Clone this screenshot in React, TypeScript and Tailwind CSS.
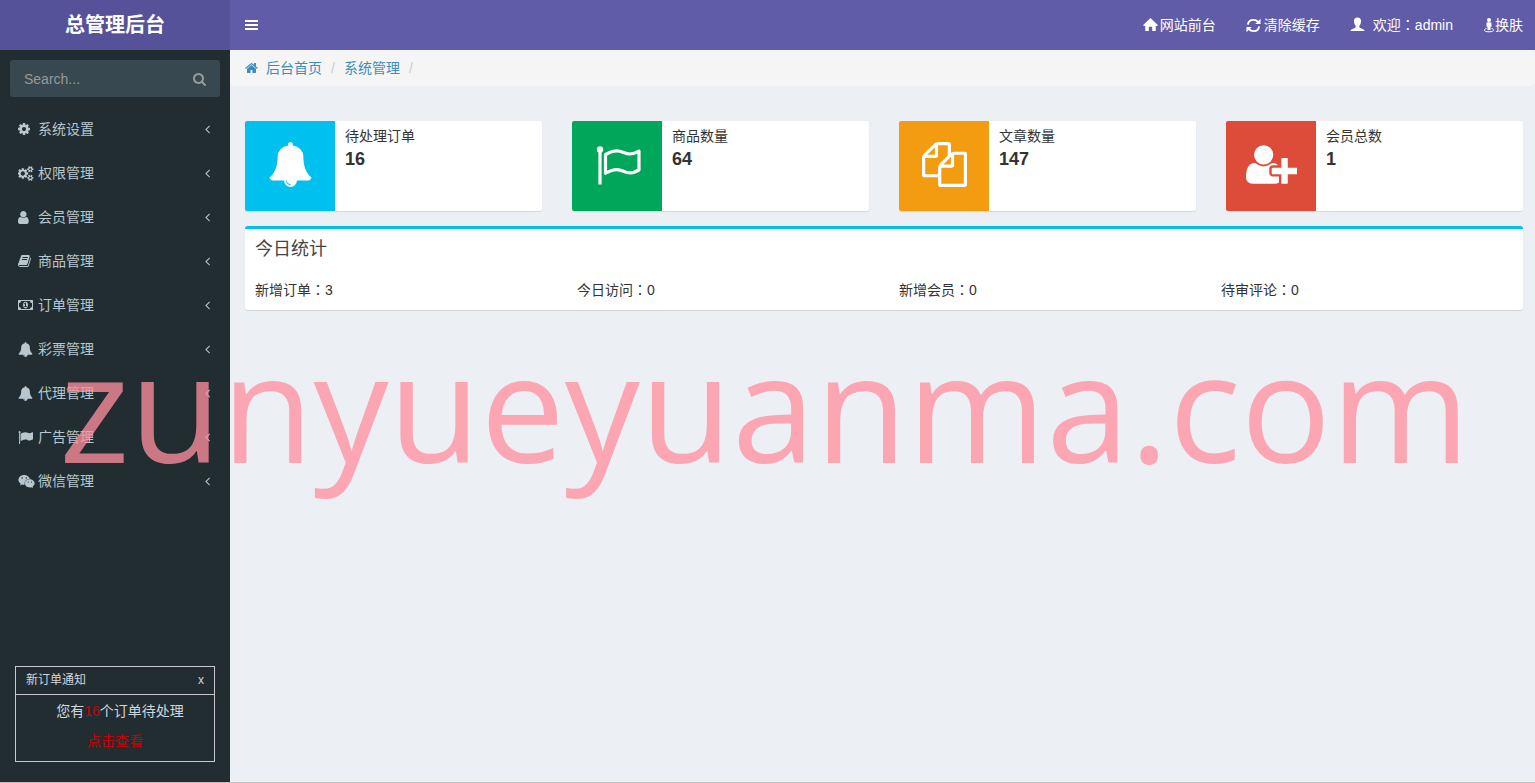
import type { ReactNode } from "react"
import { FaWeixin } from "react-icons/fa"

type Glyph = { box: string; d: string }

const GLYPHS = {
  cog: {
    box: "128 0 1536 1792",
    d: "M1152 896q0-106-75-181t-181-75-181 75-75 181 75 181 181 75 181-75 75-181zm512-109v222q0 12-8 23t-20 13l-185 28q-19 54-39 91 35 50 107 138 10 12 10 25t-9 23q-27 37-99 108t-94 71q-12 0-26-9l-138-108q-44 23-91 38-16 136-29 186-7 28-36 28h-222q-14 0-24.5-8.5t-11.5-21.5l-28-184q-49-16-90-37l-141 107q-10 9-25 9-14 0-25-11-126-114-165-168-7-10-7-23 0-12 8-23 15-21 51-66.5t54-70.5q-27-50-41-99l-183-27q-13-2-21-12.5t-8-23.5v-222q0-12 8-23t19-13l186-28q14-46 39-92-40-57-107-138-10-12-10-24 0-10 9-23 26-36 98.5-107.5t94.5-71.5q13 0 26 10l138 107q44-23 91-38 16-136 29-186 7-28 36-28h222q14 0 24.5 8.5t11.5 21.5l28 184q49 16 90 37l142-107q9-9 24-9 13 0 25 10 129 119 165 170 7 8 7 22 0 12-8 23-15 21-51 66.5t-54 70.5q26 50 41 98l183 28q13 2 21 12.5t8 23.5z",
  },
  cogs: {
    box: "0 0 1920 1792",
    d: "M832 896q0-106-75-181t-181-75-181 75-75 181 75 181 181 75 181-75 75-181zm768 512q0-52-38-90t-90-38-90 38-38 90q0 53 37.5 90.5t90.5 37.5 90.5-37.5 37.5-90.5zm0-1024q0-52-38-90t-90-38-90 38-38 90q0 53 37.5 90.5t90.5 37.5 90.5-37.5 37.5-90.5zm-384 421v185q0 10-7 19.5t-16 10.5l-155 24q-11 35-32 76 34 48 90 115 7 11 7 20 0 12-7 19-23 30-82.5 89.5t-78.5 59.5q-11 0-21-7l-115-90q-37 19-77 31-11 108-23 155-7 24-30 24h-186q-11 0-20-7.5t-10-17.5l-23-153q-34-10-75-31l-118 89q-7 7-20 7-11 0-21-8-144-133-144-160 0-9 7-19 10-14 41-53t47-61q-23-44-35-82l-152-24q-10-1-17-9.5t-7-19.5v-185q0-10 7-19.5t16-10.5l155-24q11-35 32-76-34-48-90-115-7-11-7-20 0-12 7-20 22-30 82-89t79-59q11 0 21 7l115 90q34-18 77-32 11-108 23-154 7-24 30-24h186q11 0 20 7.5t10 17.5l23 153q34 10 75 31l118-89q8-7 20-7 11 0 21 8 144 133 144 160 0 8-7 19-12 16-42 54t-45 60q23 48 34 82l152 23q10 2 17 10.5t7 19.5zm640 533v140q0 16-149 31-12 27-30 52 51 113 51 138 0 4-4 7-122 71-124 71-8 0-46-47t-52-68q-20 2-30 2t-30-2q-14 21-52 68t-46 47q-2 0-124-71-4-3-4-7 0-25 51-138-18-25-30-52-149-15-149-31v-140q0-16 149-31 13-29 30-52-51-113-51-138 0-4 4-7 4-2 35-20t59-34 30-16q8 0 46 46.5t52 67.5q20-2 30-2t30 2q51-71 92-112l6-2q4 0 124 70 4 3 4 7 0 25-51 138 17 23 30 52 149 15 149 31zm0-1024v140q0 16-149 31-12 27-30 52 51 113 51 138 0 4-4 7-122 71-124 71-8 0-46-47t-52-68q-20 2-30 2t-30-2q-14 21-52 68t-46 47q-2 0-124-71-4-3-4-7 0-25 51-138-18-25-30-52-149-15-149-31v-140q0-16 149-31 13-29 30-52-51-113-51-138 0-4 4-7 4-2 35-20t59-34 30-16q8 0 46 46.5t52 67.5q20-2 30-2t30 2q51-71 92-112l6-2q4 0 124 70 4 3 4 7 0 25-51 138 17 23 30 52 149 15 149 31z",
  },
  user: {
    box: "256 0 1280 1792",
    d: "M1536 1399q0 109-62.5 187t-150.5 78h-854q-88 0-150.5-78t-62.5-187q0-85 8.5-160.5t31.5-152 58.5-131 94-89 134.5-34.5q131 128 313 128t313-128q76 0 134.5 34.5t94 89 58.5 131 31.5 152 8.5 160.5zm-256-887q0 159-112.5 271.5t-271.5 112.5-271.5-112.5-112.5-271.5 112.5-271.5 271.5-112.5 271.5 112.5 112.5 271.5z",
  },
  book: {
    box: "64 0 1664 1792",
    d: "M1703 478q40 57 18 129l-275 906q-19 64-76.5 107.5t-122.5 43.5h-923q-77 0-148.5-53.5t-99.5-131.5q-24-67-2-127 0-4 3-27t4-37q1-8-3-21.5t-3-19.5q2-11 8-21t16.5-23.5 16.5-23.5q23-38 45-91.5t30-91.5q3-10 .5-30t-.5-28q3-11 17-28t17-23q21-36 42-92t25-90q1-9-2.5-32t.5-28q4-13 22-30.5t22-22.5q19-26 42.5-84.5t27.5-96.5q1-8-3-25.5t-2-26.5q2-8 9-18t18-23 17-21q8-12 16.5-30.5t15-35 16-36 19.5-32 26.5-23.5 36-11.5 47.5 5.5l-1 3q38-9 51-9h761q74 0 114 56t18 130l-274 906q-36 119-71.5 153.5t-128.5 34.5h-869q-27 0-38 15-11 16-1 43 24 70 144 70h923q29 0 56-15.5t35-41.5l300-987q7-22 5-57 38 15 59 43zm-1064 2q-4 13 2 22.5t20 9.5h608q13 0 25.5-9.5t16.5-22.5l21-64q4-13-2-22.5t-20-9.5h-608q-13 0-25.5 9.5t-16.5 22.5zm-83 256q-4 13 2 22.5t20 9.5h608q13 0 25.5-9.5t16.5-22.5l21-64q4-13-2-22.5t-20-9.5h-608q-13 0-25.5 9.5t-16.5 22.5z",
  },
  money: {
    box: "0 0 1920 1792",
    d: "M768 1152h384v-96h-128v-448h-114l-148 137 77 80q42-37 55-57h2v288h-128v96zm512-256q0 70-21 142t-59.5 134-101.5 101-138 39-138-39-101.5-101-59.5-134-21-142 21-142 59.5-134 101.5-101 138-39 138 39 101.5 101 59.5 134 21 142zm512 256v-512q-106 0-181-75t-75-181h-1152q0 106-75 181t-181 75v512q106 0 181 75t75 181h1152q0-106 75-181t181-75zm128-832v1152q0 26-19 45t-45 19h-1792q-26 0-45-19t-19-45v-1152q0-26 19-45t45-19h1792q26 0 45 19t19 45z",
  },
  bell: {
    box: "0 0 1792 1792",
    d: "M912 1696q0-16-16-16-59 0-101.5-42.5t-42.5-101.5q0-16-16-16t-16 16q0 73 51.5 124.5t124.5 51.5q16 0 16-16zm816-288q0 52-38 90t-90 38h-448q0 106-75 181t-181 75-181-75-75-181h-448q-52 0-90-38t-38-90q50-42 91-88t85-119.5 74.5-158.5 50-206 19.5-260q0-152 117-282.5t307-158.5q-8-19-8-39 0-40 28-68t68-28 68 28 28 68q0 20-8 39 190 28 307 158.5t117 282.5q0 139 19.5 260t50 206 74.5 158.5 85 119.5 91 88z",
  },
  flag: {
    box: "0 0 1792 1792",
    d: "M320 256q0 72-64 110v1266q0 13-9.5 22.5t-22.5 9.5h-64q-13 0-22.5-9.5t-9.5-22.5v-1266q-64-38-64-110 0-53 37.5-90.5t90.5-37.5 90.5 37.5 37.5 90.5zm1472 64v763q0 25-12.5 38.5t-39.5 27.5q-215 116-369 116-61 0-123.5-22t-108.5-48-115.5-48-142.5-22q-192 0-464 146-17 9-33 9-26 0-45-19t-19-45v-742q0-32 31-55 21-14 79-43 236-120 421-120 107 0 200 29t219 88q38 19 88 19 54 0 117.5-21t110-47 88-47 54.5-21q26 0 45 19t19 45z",
  },
  files: {
    box: "0 0 1792 1792",
    d: "M1696 384q40 0 68 28t28 68v1216q0 40-28 68t-68 28h-960q-40 0-68-28t-28-68v-288h-544q-40 0-68-28t-28-68v-672q0-40 20-88t48-76l408-408q28-28 76-48t88-20h416q40 0 68 28t28 68v328q68-40 128-40h416zm-544 213l-299 299h299v-299zm-640-384l-299 299h299v-299zm196 647l316-316v-416h-384v416q0 40-28 68t-68 28h-416v640h512v-256q0-40 20-88t48-76zm956 804v-1152h-384v416q0 40-28 68t-68 28h-416v640h896z",
  },
  userPlus: {
    box: "0 0 2048 1792",
    d: "M704 896q-159 0-271.5-112.5t-112.5-271.5 112.5-271.5 271.5-112.5 271.5 112.5 112.5 271.5-112.5 271.5-271.5 112.5zm960 128h352q13 0 22.5 9.5t9.5 22.5v192q0 13-9.5 22.5t-22.5 9.5h-352v352q0 13-9.5 22.5t-22.5 9.5h-192q-13 0-22.5-9.5t-9.5-22.5v-352h-352q-13 0-22.5-9.5t-9.5-22.5v-192q0-13 9.5-22.5t22.5-9.5h352v-352q0-13 9.5-22.5t22.5-9.5h192q13 0 22.5 9.5t9.5 22.5v352zm-736 224q0 52 38 90t90 38h256v238q-68 50-171 50h-874q-121 0-194-69t-73-190q0-53 3.5-103.5t14-109 26.5-108.5 43-97.5 62-81 85.5-53.5 111.5-20q19 0 39 17 79 61 154.5 91.5t164.5 30.5 164.5-30.5 154.5-91.5q20-17 39-17 132 0 217 96h-223q-52 0-90 38t-38 90v192z",
  },
  search: {
    box: "64 0 1664 1792",
    d: "M1216 832q0-185-131.5-316.5t-316.5-131.5-316.5 131.5-131.5 316.5 131.5 316.5 316.5 131.5 316.5-131.5 131.5-316.5zm512 832q0 52-38 90t-90 38q-54 0-90-38l-343-342q-179 124-399 124-143 0-273.5-55.5t-225-150-150-225-55.5-273.5 55.5-273.5 150-225 225-150 273.5-55.5 273.5 55.5 225 150 150 225 55.5 273.5q0 220-124 399l343 343q37 37 37 90z",
  },
  home: {
    box: "64 0 1664 1792",
    d: "M1472 992v480q0 26-19 45t-45 19h-384v-384h-256v384h-384q-26 0-45-19t-19-45v-480q0-1 .5-3t.5-3l575-474 575 474q1 2 1 6zm223-69l-62 74q-8 9-21 11h-3q-13 0-21-7l-692-577-692 577q-12 8-24 7-13-2-21-11l-62-74q-8-10-7-23.5t11-21.5l719-599q32-26 76-26t76 26l244 204v-195q0-14 9-23t23-9h192q14 0 23 9t9 23v408l219 182q10 8 11 21.5t-7 23.5z",
  },
  angleLeft: {
    box: "576 0 640 1792",
    d: "M1203 544q0 13-10 23l-393 393 393 393q10 10 10 23t-10 23l-50 50q-10 10-23 10t-23-10l-466-466q-10-10-10-23t10-23l466-466q10-10 23-10t23 10l50 50q10 10 10 23z",
  },
  bars: {
    box: "0 0 13 14",
    d: "M0 2h13v2h-13zM0 6h13v2h-13zM0 10h13v2h-13z",
  },
  navHome: {
    box: "0 0 16 16",
    d: "M8 1l7.8 7.6-.6.9h-1.6v5q0 .5-.5.5h-3.300v-4.500h-3.600v4.500h-3.300q-.5 0-.5-.5v-5h-1.600l-.6-.9z",
  },
  navUser: {
    box: "0 0 16 16",
    d: "M8 .5q3.700 0 3.800 4 0 2.700-1.800 4.900v1.400q.2.700 1.500 1.200l3 1.200q1 .5 1 1.800h-15q0-1.300 1-1.800l3-1.200q1.300-.5 1.500-1.200v-1.400q-1.800-2.200-1.800-4.900.1-4 3.800-4z",
  },
} satisfies Record<string, Glyph>

type GlyphName = keyof typeof GLYPHS

function Icon({ name, className = "h-3.5" }: { name: GlyphName; className?: string }) {
  return (
    <svg viewBox={GLYPHS[name].box} className={`w-auto shrink-0 fill-current ${className}`} aria-hidden="true">
      <path d={GLYPHS[name].d} />
    </svg>
  )
}

function FlagOutline() {
  return (
    <svg viewBox="0 0 46 45" className="h-[45px] w-[46px] fill-none stroke-current" aria-hidden="true">
      <circle cx="5" cy="7.500" r="3.200" className="fill-current stroke-none" />
      <path d="M5 8v34.500" strokeWidth="3.200" />
      <path
        d="M10.500 12.500q6.500-3.700 11.500-3.700c5 0 8 3.200 13 3.200 3 0 6-1.200 9-2.800v18.800c-3 1.700-6 2.900-9 2.900-5 0-8-3.300-13-3.300q-5 0-11.500 3.600z"
        strokeWidth="3.200"
        strokeLinejoin="round"
      />
    </svg>
  )
}

function Refresh() {
  return (
    <svg viewBox="0 0 16 16" className="size-[15px] shrink-0 fill-none stroke-current" aria-hidden="true">
      <path d="M2 7c.4-3 2.800-5 6-5 2 0 3.600.8 4.800 2.200M14 9c-.4 3-2.800 5-6 5-2 0-3.600-.8-4.800-2.200" strokeWidth="2" />
      <path d="M15.500.800v5.700h-5.700zM.5 15.200v-5.700h5.700z" className="fill-current stroke-none" />
    </svg>
  )
}

function StreetView() {
  return (
    <svg viewBox="0 0 12 16" className="h-4 w-3 shrink-0 fill-current" aria-hidden="true">
      <circle cx="6" cy="3" r="2" />
      <path d="M4.500 5.300h3q1 0 1 1v3.400h-1v3.300h-3v-3.300h-1v-3.400q0-1 1-1z" />
      <path d="M3.500 11.500c-3.200.7-3.200 3.300 2.500 3.300s5.700-2.600 2.500-3.300" fill="none" stroke="currentColor" />
    </svg>
  )
}

// The Traditional Chinese face centres its full-width colon.
function Colon() {
  return <span className="font-['Noto_Sans_CJK_TC',sans-serif] leading-none">：</span>
}

const MENU: { label: string; icon: ReactNode }[] = [
  { label: "系统设置", icon: <Icon name="cog" /> },
  { label: "权限管理", icon: <Icon name="cogs" className="h-[15px]" /> },
  { label: "会员管理", icon: <Icon name="user" className="h-[15px]" /> },
  { label: "商品管理", icon: <Icon name="book" /> },
  { label: "订单管理", icon: <Icon name="money" /> },
  { label: "彩票管理", icon: <Icon name="bell" className="h-[15px]" /> },
  { label: "代理管理", icon: <Icon name="bell" className="h-[15px]" /> },
  { label: "广告管理", icon: <Icon name="flag" className="h-[15px]" /> },
  { label: "微信管理", icon: <FaWeixin className="size-[17px]" /> },
]

const CARDS: { label: string; value: number; color: string; icon: ReactNode }[] = [
  { label: "待处理订单", value: 16, color: "bg-[#00c0ef]", icon: <Icon name="bell" className="h-[45px]" /> },
  { label: "商品数量", value: 64, color: "bg-[#00a65a]", icon: <FlagOutline /> },
  { label: "文章数量", value: 147, color: "bg-[#f39c12]", icon: <Icon name="files" className="h-[45px]" /> },
  { label: "会员总数", value: 1, color: "bg-[#dd4b39]", icon: <Icon name="userPlus" className="h-[45px]" /> },
]

const TODAY = [
  { label: "新增订单", value: 3 },
  { label: "今日访问", value: 0 },
  { label: "新增会员", value: 0 },
  { label: "待审评论", value: 0 },
]

function Header() {
  return (
    <header className="flex h-[50px] text-white">
      <a href="#" className="flex w-[230px] shrink-0 items-center justify-center bg-[#555299] text-xl font-bold">
        总管理后台
      </a>
      <nav className="flex flex-1 items-center justify-between bg-[#605ca8] pr-3 pl-[15px]">
        <button type="button" aria-label="切换菜单">
          <Icon name="bars" />
        </button>
        <div className="flex items-center gap-[30px]">
          <a href="#" className="flex items-center gap-0.5">
            <Icon name="navHome" className="h-4 pb-px" />
            网站前台
          </a>
          <a href="#" className="flex items-center gap-[3px]">
            <Refresh />
            清除缓存
          </a>
          <a href="#" className="flex items-center gap-2">
            <Icon name="navUser" className="h-4 pb-px" />
            <span>
              欢迎
              <Colon />
              admin
            </span>
          </a>
          <a href="#" className="flex items-center">
            <StreetView />
            换肤
          </a>
        </div>
      </nav>
    </header>
  )
}

function OrderNotice() {
  return (
    <section className="m-[15px] mb-5 h-24 border border-[#c8c8c8] text-[#d2d6de]">
      <div className="flex h-7 items-center justify-between border-b border-[#c8c8c8] px-2.5 pb-0.5 text-xs">
        <h2>新订单通知</h2>
        <button type="button" aria-label="关闭">
          x
        </button>
      </div>
      <div className="pt-px text-center leading-[30px]">
        <p className="pl-2.5">
          您有<span className="text-[#cc0000]">16</span>个订单待处理
        </p>
        <a href="#" className="text-[#cc0000]">
          点击查看
        </a>
      </div>
    </section>
  )
}

function Sidebar() {
  return (
    <aside className="flex w-[230px] shrink-0 flex-col justify-between bg-[#222d32] text-[#b8c7ce]">
      <div>
        <form className="m-2.5 flex h-[37px] rounded-[3px] bg-[#374850] text-[#999999]">
          <input
            type="text"
            aria-label="Search"
            placeholder="Search..."
            className="min-w-0 flex-1 px-3.5 outline-none placeholder:text-[#999999]"
          />
          <button type="button" aria-label="搜索" className="pr-3.5 pl-3">
            <Icon name="search" />
          </button>
        </form>
        <ul>
          {MENU.map((item) => (
            <li key={item.label}>
              <a href="#" className="flex h-11 items-center pr-5 pl-[18px]">
                <span className="w-5">{item.icon}</span>
                <span className="flex-1">{item.label}</span>
                <Icon name="angleLeft" />
              </a>
            </li>
          ))}
        </ul>
      </div>
      <OrderNotice />
    </aside>
  )
}

function Breadcrumb() {
  return (
    <nav className="flex h-9 items-center rounded-sm bg-[#f5f5f5] px-[15px] text-[#3c8dbc]">
      <a href="#" className="flex items-center gap-2">
        <Icon name="home" />
        后台首页
      </a>
      <span className="px-[9px] text-[#cccccc]">/</span>
      <a href="#">系统管理</a>
      <span className="px-[9px] text-[#cccccc]">/</span>
    </nav>
  )
}

function Dashboard() {
  return (
    <main className="min-w-0 flex-1 bg-[#ecf0f5] text-[#333333]">
      <Breadcrumb />
      <div className="pt-[35px] pr-3 pl-[15px]">
        <div className="grid grid-cols-4 gap-[30px]">
          {CARDS.map((card) => (
            <div key={card.label} className="flex h-[90px] overflow-hidden rounded-xs bg-white shadow-[0_1px_1px_rgba(0,0,0,0.1)]">
              <div className={`flex w-[90px] shrink-0 items-center justify-center pb-1 pl-px text-white ${card.color}`}>
                {card.icon}
              </div>
              <div className="px-2.5 py-[5px]">
                <p className="leading-5">{card.label}</p>
                <p className="text-lg leading-[26px] font-bold">{card.value}</p>
              </div>
            </div>
          ))}
        </div>
        <section className="mt-[15px] rounded-[3px] border-t-[3px] border-[#00c0ef] bg-white px-2.5 pb-2.5 shadow-[0_1px_1px_rgba(0,0,0,0.1)]">
          <h2 className="pt-2 text-lg leading-6 text-[#444444]">今日统计</h2>
          <ul className="-mx-[15px] grid grid-cols-4 pt-[19px] leading-5">
            {TODAY.map((item) => (
              <li key={item.label} className="px-[15px]">
                {item.label}
                <Colon />
                {item.value}
              </li>
            ))}
          </ul>
        </section>
      </div>
    </main>
  )
}

export default function App() {
  return (
    <div className="relative flex min-h-screen flex-col overflow-hidden border-b border-[#c0c0c0] font-['Liberation_Sans','Noto_Sans_CJK_SC',sans-serif] text-sm">
      <Header />
      <div className="flex flex-1">
        <Sidebar />
        <Dashboard />
      </div>
      <p className="pointer-events-none absolute inset-x-0 top-[315px] pr-1.5 text-center font-['Open_Sans',sans-serif] text-[150px] leading-[180px] text-[#ff8f9e]/77">
        zunyueyuanma.com
      </p>
    </div>
  )
}
